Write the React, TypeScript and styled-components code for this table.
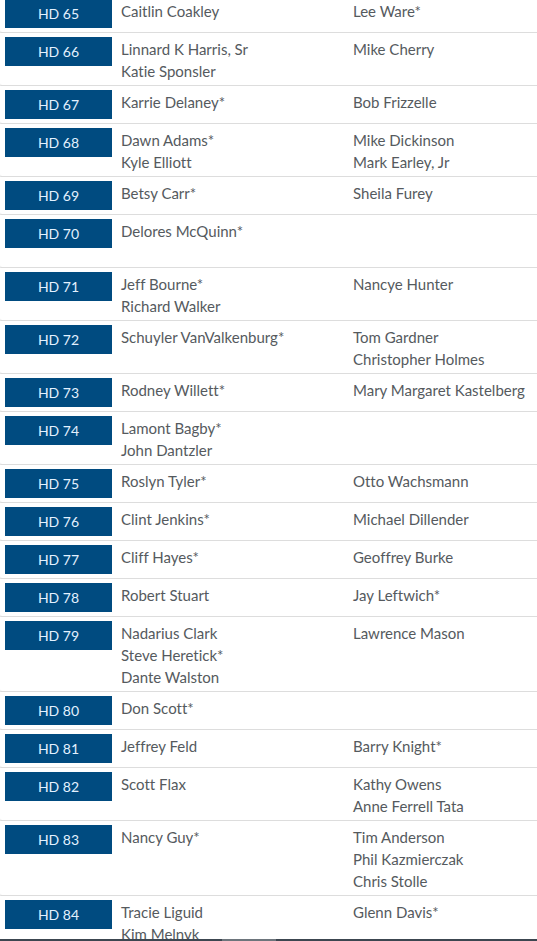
import { createGlobalStyle } from 'styled-components';
import styled from 'styled-components';

const GlobalStyle = createGlobalStyle`
  html, body {
    margin: 0;
    padding: 0;
    background: #fff;
    overflow: hidden;
  }
  body {
    font-family: Lato, "Open Sans", Arial, sans-serif;
  }
`;

const Table = styled.div`
  display: flex;
  flex-direction: column;
  margin-top: -5px;
`;

const Row = styled.div`
  display: grid;
  grid-template-columns: 107px 223px 1fr;
  column-gap: 9px;
  align-items: start;
  padding: 4px 0 4px 5px;
  border-bottom: 1px solid #dddddd;
  border-left: 1px solid #f2f2f2;
  border-bottom-left-radius: 3px;
  margin-left: -1px;
`;

const Badge = styled.div`
  height: 29px;
  line-height: 29px;
  background: #004b80;
  color: #e3f1ff;
  font-size: 14px;
  text-align: center;
`;

const Names = styled.div`
  display: flex;
  flex-direction: column;
  padding-top: 1px;
  margin-bottom: -1px;
  font-size: 15px;
  line-height: 22px;
  color: #555a5e;
  font-variant-ligatures: none;
`;

const Name = styled.span`
  white-space: nowrap;
  min-height: 22px;
`;

const ScrollBar = styled.div`
  position: fixed;
  left: 0;
  right: 0;
  bottom: 0;
  height: 2px;
  background: #3c4650;
  &::after {
    content: '';
    position: absolute;
    left: 222px;
    width: 54px;
    top: 0;
    bottom: 0;
    background: #6d757c;
  }
`;

type District = { hd: number; dem: string[]; rep: string[] };

const districts: District[] = [
  { hd: 65, dem: ['Caitlin Coakley'], rep: ['Lee Ware*'] },
  { hd: 66, dem: ['Linnard K Harris, Sr', 'Katie Sponsler'], rep: ['Mike Cherry'] },
  { hd: 67, dem: ['Karrie Delaney*'], rep: ['Bob Frizzelle'] },
  { hd: 68, dem: ['Dawn Adams*', 'Kyle Elliott'], rep: ['Mike Dickinson', 'Mark Earley, Jr'] },
  { hd: 69, dem: ['Betsy Carr*'], rep: ['Sheila Furey'] },
  { hd: 70, dem: ['Delores McQuinn*', ''], rep: [] },
  { hd: 71, dem: ['Jeff Bourne*', 'Richard Walker'], rep: ['Nancye Hunter'] },
  { hd: 72, dem: ['Schuyler VanValkenburg*'], rep: ['Tom Gardner', 'Christopher Holmes'] },
  { hd: 73, dem: ['Rodney Willett*'], rep: ['Mary Margaret Kastelberg'] },
  { hd: 74, dem: ['Lamont Bagby*', 'John Dantzler'], rep: [] },
  { hd: 75, dem: ['Roslyn Tyler*'], rep: ['Otto Wachsmann'] },
  { hd: 76, dem: ['Clint Jenkins*'], rep: ['Michael Dillender'] },
  { hd: 77, dem: ['Cliff Hayes*'], rep: ['Geoffrey Burke'] },
  { hd: 78, dem: ['Robert Stuart'], rep: ['Jay Leftwich*'] },
  { hd: 79, dem: ['Nadarius Clark', 'Steve Heretick*', 'Dante Walston'], rep: ['Lawrence Mason'] },
  { hd: 80, dem: ['Don Scott*'], rep: [] },
  { hd: 81, dem: ['Jeffrey Feld'], rep: ['Barry Knight*'] },
  { hd: 82, dem: ['Scott Flax'], rep: ['Kathy Owens', 'Anne Ferrell Tata'] },
  { hd: 83, dem: ['Nancy Guy*'], rep: ['Tim Anderson', 'Phil Kazmierczak', 'Chris Stolle'] },
  { hd: 84, dem: ['Tracie Liguid', 'Kim Melnyk'], rep: ['Glenn Davis*'] },
];

export default function App() {
  return (
    <>
      <GlobalStyle />
      <Table>
        {districts.map((d) => (
          <Row key={d.hd}>
            <Badge>HD {d.hd}</Badge>
            <Names>
              {d.dem.map((n, i) => (
                <Name key={i}>{n}</Name>
              ))}
            </Names>
            <Names>
              {d.rep.map((n, i) => (
                <Name key={i}>{n}</Name>
              ))}
            </Names>
          </Row>
        ))}
      </Table>
      <ScrollBar />
    </>
  );
}
